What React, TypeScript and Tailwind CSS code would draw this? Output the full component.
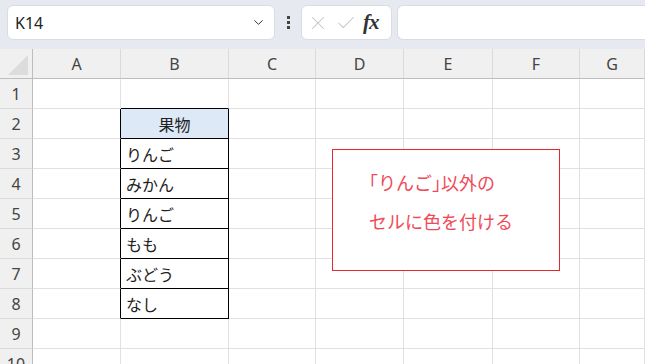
import { ChevronDown, X, Check } from "lucide-react";

const COLS = ["A", "B", "C", "D", "E", "F", "G"];
const FRUITS = ["りんご", "みかん", "りんご", "もも", "ぶどう", "なし"];
const JP = "font-['Noto_Sans_CJK_JP','Noto_Sans',sans-serif]";
const GRID = "grid grid-cols-[33px_88px_108px_87px_88px_89px_87px_1fr]";

function cellText(row: number, col: number) {
  if (col !== 1) return null;
  if (row === 2) return "果物";
  if (row >= 3 && row <= 8) return FRUITS[row - 3];
  return null;
}

export default function App() {
  const rows = [1, 2, 3, 4, 5, 6, 7, 8, 9, 10];

  return (
    <div className="w-[645px] h-[364px] overflow-hidden bg-white relative font-['Noto_Sans',sans-serif]">
      {/* formula bar */}
      <div className="h-[49px] bg-[#e6e9ef] flex items-start pt-[5px] pl-[7px] gap-0">
        <div className="w-[268px] h-[35px] bg-white rounded-[6px] border border-[#d9dce2] flex items-center pl-[7px] pr-[8px]">
          <span className="text-[16px] text-[#222] flex-1">K14</span>
          <ChevronDown size={15} strokeWidth={1.6} className="text-[#333]" />
        </div>
        <div className="w-[26px] h-[35px] flex flex-col items-center justify-center gap-[2px]">
          <span className="w-[3px] h-[3px] bg-[#444]" />
          <span className="w-[3px] h-[3px] bg-[#444]" />
          <span className="w-[3px] h-[3px] bg-[#444]" />
        </div>
        <div className="w-[91px] h-[35px] bg-white rounded-[6px] border border-[#d9dce2] flex items-center pl-[5px] gap-[6px]">
          <X size={22} strokeWidth={1.1} className="text-[#c4c4c4]" />
          <Check size={22} strokeWidth={1.1} className="text-[#c4c4c4]" />
          <span className="font-['Liberation_Serif',serif] italic font-bold text-[21px] text-[#333] tracking-[-1px] leading-none">fx</span>
        </div>
        <div className="ml-[5px] flex-1 h-[35px] bg-white rounded-l-[6px] border border-r-0 border-[#d9dce2]" />
      </div>

      {/* sheet */}
      <div className={GRID}>
        <div className="h-[30px] bg-[#f0f0f0] border-r border-b border-[#bdbdbd] relative">
          <svg className="absolute left-[8px] top-[6px]" width="20" height="20" viewBox="0 0 20 20">
            <polygon points="20,0 20,20 0,20" fill="#dcdcdc" />
          </svg>
        </div>
        {COLS.map((c) => (
          <div
            key={c}
            className="h-[30px] bg-[#f0f0f0] border-r border-b border-r-[#dadada] border-b-[#bdbdbd] flex items-center justify-center text-[16px] text-[#444]"
          >
            {c}
          </div>
        ))}

        {rows.map((r) => (
          <div key={r} className="contents">
            <div className="h-[30px] bg-[#f0f0f0] border-r border-b border-r-[#bdbdbd] border-b-[#dadada] flex items-center justify-center text-[16px] text-[#444]">
              {r}
            </div>
            {COLS.map((c, ci) => {
              const inTable = ci === 1 && r >= 2 && r <= 8;
              const leftOfTable = ci === 0 && r >= 2 && r <= 8;
              const aboveTable = ci === 1 && r === 1;
              const txt = cellText(r, ci);
              return (
                <div
                  key={c}
                  className={`h-[30px] border-r border-b flex items-center ${JP} text-[16px] text-[#222] ${
                    inTable ? "border-black" : "border-[#e1e1e1]"
                  } ${leftOfTable ? "border-r-black" : ""} ${aboveTable ? "border-b-black" : ""} ${
                    r === 2 && ci === 1 ? "bg-[#dde9f6] justify-center" : "pl-[5px]"
                  }`}
                >
                  {txt}
                </div>
              );
            })}
          </div>
        ))}
      </div>

      {/* callout shape */}
      <div className="absolute left-[332px] top-[149px] w-[228px] h-[122px] border border-[#e8262e] bg-white">
        <div className={`${JP} text-[18px] text-[#f04a57] leading-[39px] pl-[36px] pt-[13px]`}>
          <div>
            <span className="[font-feature-settings:'halt']">「</span>りんご<span className="[font-feature-settings:'halt']">」</span>以外の
          </div>
          <div>セルに色を付ける</div>
        </div>
      </div>
    </div>
  );
}
